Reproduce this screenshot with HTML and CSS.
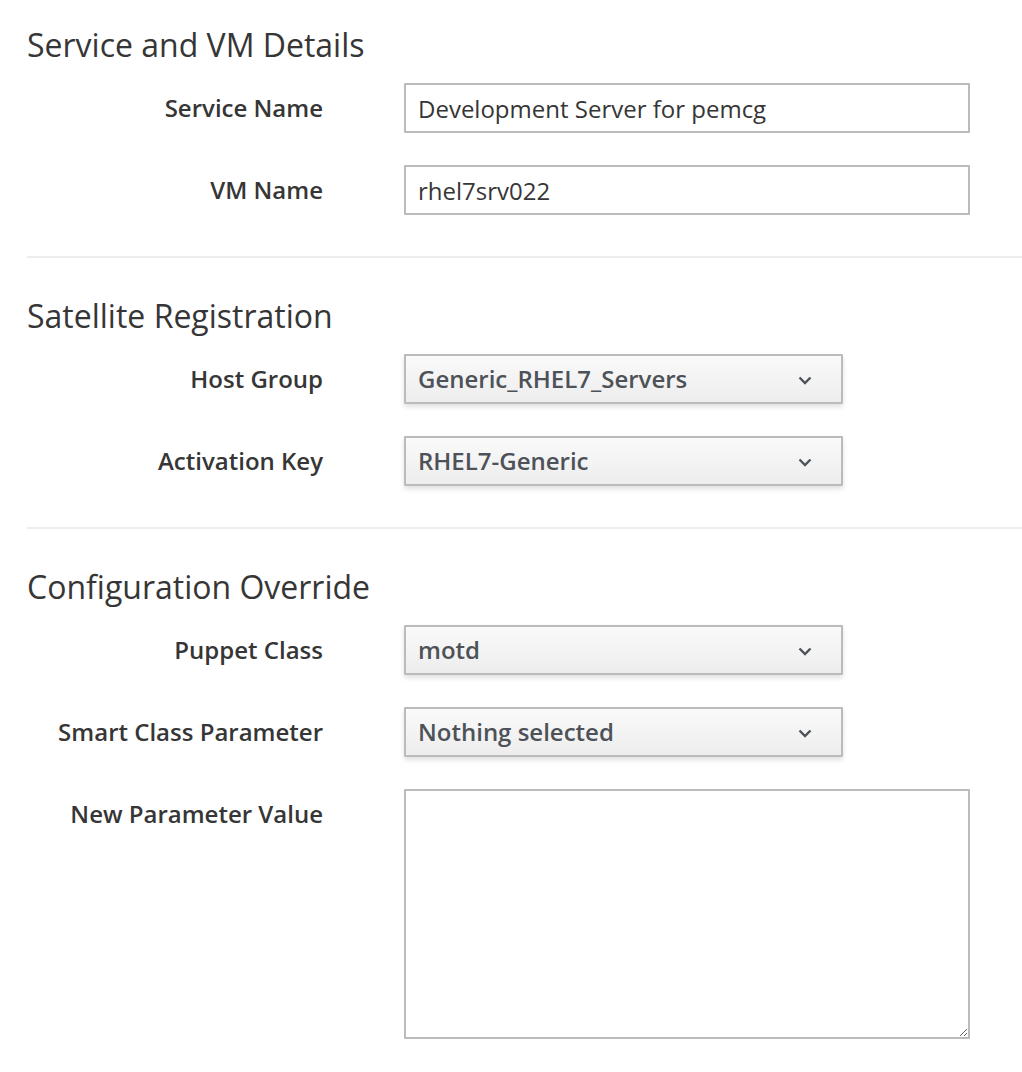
FILE: index.html
```html
<!DOCTYPE html>
<html>
<head>
<meta charset="utf-8">
<link rel="stylesheet" href="styles.css">
</head>
<body>
<form class="form">
  <section class="section">
    <h2 class="section-title">Service and VM Details</h2>
    <div class="rows">
      <div class="row">
        <label class="label">Service Name</label>
        <input class="input" type="text" value="Development Server for pemcg">
      </div>
      <div class="row">
        <label class="label">VM Name</label>
        <input class="input" type="text" value="rhel7srv022">
      </div>
    </div>
  </section>
  <section class="section">
    <h2 class="section-title">Satellite Registration</h2>
    <div class="rows">
      <div class="row">
        <label class="label">Host Group</label>
        <div class="select"><span class="select-text">Generic_RHEL7_Servers</span><svg class="caret" width="14" height="9" viewBox="0 0 14 9"><polyline points="1.5,1.5 7,7 12.5,1.5" fill="none" stroke="#4d5258" stroke-width="2.4"/></svg></div>
      </div>
      <div class="row">
        <label class="label">Activation Key</label>
        <div class="select"><span class="select-text">RHEL7-Generic</span><svg class="caret" width="14" height="9" viewBox="0 0 14 9"><polyline points="1.5,1.5 7,7 12.5,1.5" fill="none" stroke="#4d5258" stroke-width="2.4"/></svg></div>
      </div>
    </div>
  </section>
  <section class="section last">
    <h2 class="section-title">Configuration Override</h2>
    <div class="rows">
      <div class="row">
        <label class="label">Puppet Class</label>
        <div class="select"><span class="select-text">motd</span><svg class="caret" width="14" height="9" viewBox="0 0 14 9"><polyline points="1.5,1.5 7,7 12.5,1.5" fill="none" stroke="#4d5258" stroke-width="2.4"/></svg></div>
      </div>
      <div class="row">
        <label class="label">Smart Class Parameter</label>
        <div class="select"><span class="select-text">Nothing selected</span><svg class="caret" width="14" height="9" viewBox="0 0 14 9"><polyline points="1.5,1.5 7,7 12.5,1.5" fill="none" stroke="#4d5258" stroke-width="2.4"/></svg></div>
      </div>
      <div class="row">
        <label class="label">New Parameter Value</label>
        <textarea class="textarea"></textarea>
      </div>
    </div>
  </section>
</form>
</body>
</html>
```
FILE: styles.css
```css
html, body {
  margin: 0;
  padding: 0;
  background: #ffffff;
}
body {
  font-family: "Open Sans", "Liberation Sans", sans-serif;
  color: #363636;
  padding: 25px 0 0 27px;
}
.form {
  display: flex;
  flex-direction: column;
}
.section {
  padding-bottom: 41px;
  border-bottom: 2px solid #ededed;
  margin-bottom: 38px;
}
.section.last {
  border-bottom: none;
  margin-bottom: 0;
}
.section-title {
  margin: 0 0 18px 0;
  font-size: 32px;
  line-height: 40px;
  font-weight: 400;
  color: #363636;
}
.rows {
  display: flex;
  flex-direction: column;
  gap: 32px;
}
.row {
  display: grid;
  grid-template-columns: 296px 566px;
  column-gap: 81px;
  align-items: start;
}
.label {
  text-align: right;
  font-size: 24px;
  line-height: 50px;
  font-weight: 600;
  color: #363636;
}
.input {
  box-sizing: border-box;
  height: 50px;
  width: 566px;
  margin: 0;
  border: 2px solid #bbbbbb;
  border-radius: 1px;
  padding: 0 12px;
  font-family: "Open Sans", "Liberation Sans", sans-serif;
  font-size: 24px;
  color: #363636;
  background: #fff;
  outline: none;
}
.select {
  box-sizing: border-box;
  height: 50px;
  width: 439px;
  border: 2px solid #bbbbbb;
  border-radius: 1px;
  background: linear-gradient(to bottom, #fafafa 0%, #ededed 100%);
  box-shadow: 0 3px 5px rgba(3, 3, 3, 0.12);
  display: flex;
  align-items: center;
  justify-content: space-between;
  padding: 0 29px 0 12px;
}
.select-text {
  font-size: 24px;
  font-weight: 600;
  color: #4d5258;
  line-height: 46px;
}
.caret {
  display: block;
  margin-top: 2px;
}
.textarea {
  box-sizing: border-box;
  width: 566px;
  height: 250px;
  margin: 0;
  border: 2px solid #bbbbbb;
  border-radius: 1px;
  padding: 8px 12px;
  font-family: "Open Sans", "Liberation Sans", sans-serif;
  font-size: 24px;
  resize: both;
  outline: none;
  display: block;
}
```
